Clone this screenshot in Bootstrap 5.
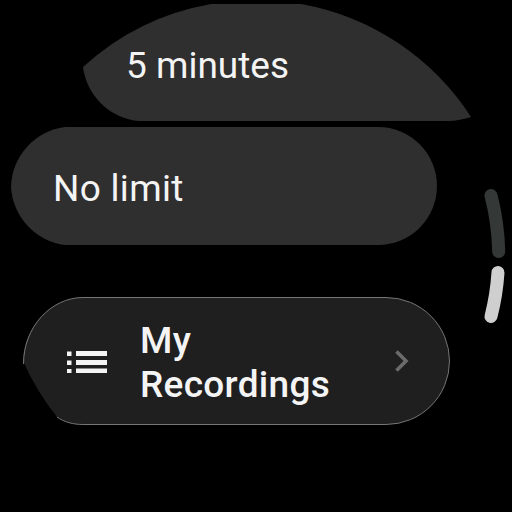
<!DOCTYPE html>
<html lang="en">
<head>
<meta charset="utf-8">
<title>Recording limit</title>
<link href="https://cdn.jsdelivr.net/npm/bootstrap@5.3.0/dist/css/bootstrap.min.css" rel="stylesheet">
<style>
html, body { background: #000; margin: 0; height: 100%; overflow: hidden; }
.watch-screen { position: relative; width: 512px; height: 512px; padding-top: 4px; background: #000; font-family: Roboto, "Liberation Sans", sans-serif; color: #f4f4f4; }
.opt-chip { background: #2f2f2f; font-size: 37px; line-height: 44px; letter-spacing: .3px; }
.opt-one { width: 388px; height: 117px; margin-left: 83px; padding: 6px 0 0 43px; letter-spacing: 0; clip-path: path("M0 63 A256 256 0 0 1 128 0 L218 0 A256 256 0 0 1 388 113 C381 115 373 117 365 117 L56 117 A62 62 0 0 1 0 63 Z"); }
.opt-two { width: 426px; height: 118px; margin-left: 11px; margin-top: 6px; padding: 5px 0 0 42px; clip-path: path("M54 0 L367 0 A59 59 0 0 1 367 118 L54 118 A62 62 0 0 1 0 60 A62 62 0 0 1 54 0 Z"); }
.rec-chip { position: relative; width: 427px; height: 128px; margin-left: 23px; margin-top: 52px; padding: 0 40px 0 44px; font-weight: 500; font-size: 37px; line-height: 44px; letter-spacing: .3px; }
.rec-shape { position: absolute; top: 0; left: 0; }
.rec-icon { position: relative; width: 44px; height: 24px; flex: none; }
.rec-label { position: relative; margin-left: 29px; padding-top: 3px; }
.rec-chev { position: relative; flex: none; width: 16px; height: 24px; }
.scroll-track { position: absolute; top: 0; left: 0; }
</style>
</head>
<body>
<div class="watch-screen d-flex flex-column">
  <div class="opt-chip opt-one d-flex align-items-center">5 minutes</div>
  <div class="opt-chip opt-two d-flex align-items-center">No limit</div>
  <div class="rec-chip d-flex align-items-center">
    <svg class="rec-shape" width="427" height="128" viewBox="0 0 427 128">
      <path d="M0 64 C1 30 28 0.5 60 0.5 L363 0.5 A63.5 63.5 0 0 1 363 127.5 L60 127.5 C50 127.5 41 125 34 120 A256 256 0 0 1 0 64 Z" fill="#1f1f1f"/>
      <path d="M0.5 67 C0.5 30 28 0.5 60 0.5 L363 0.5 A63.5 63.5 0 0 1 363 127.5 L60 127.5 C50 127.5 41 125 34 120" fill="none" stroke="#757575" stroke-width="1"/>
    </svg>
    <svg class="rec-icon" viewBox="0 0 44 24">
      <g fill="#f4f4f4">
        <rect x="0" y="2.5" width="4.5" height="4.5"/><rect x="9" y="2" width="31" height="5"/>
        <rect x="0" y="11.5" width="4.5" height="4.5"/><rect x="9" y="11" width="31" height="5"/>
        <rect x="0" y="20" width="4.5" height="4.5"/><rect x="9" y="19.5" width="31" height="5"/>
      </g>
    </svg>
    <div class="rec-label flex-grow-1">My<br>Recordings</div>
    <svg class="rec-chev" viewBox="0 0 16 24">
      <path d="M2.5 2.5 L12 12 L2.5 21.5" fill="none" stroke="#6b6b6b" stroke-width="3.6"/>
    </svg>
  </div>
  <svg class="scroll-track" width="512" height="512" viewBox="0 0 512 512">
    <path d="M491 195.5 A243 243 0 0 1 498.7 251.5" fill="none" stroke="#343836" stroke-width="13" stroke-linecap="round"/>
    <path d="M498 272.5 A243 243 0 0 1 491 316.5" fill="none" stroke="#cfcfcf" stroke-width="13" stroke-linecap="round"/>
  </svg>
</div>
<script src="https://cdn.jsdelivr.net/npm/bootstrap@5.3.0/dist/js/bootstrap.bundle.min.js"></script>
</body>
</html>
